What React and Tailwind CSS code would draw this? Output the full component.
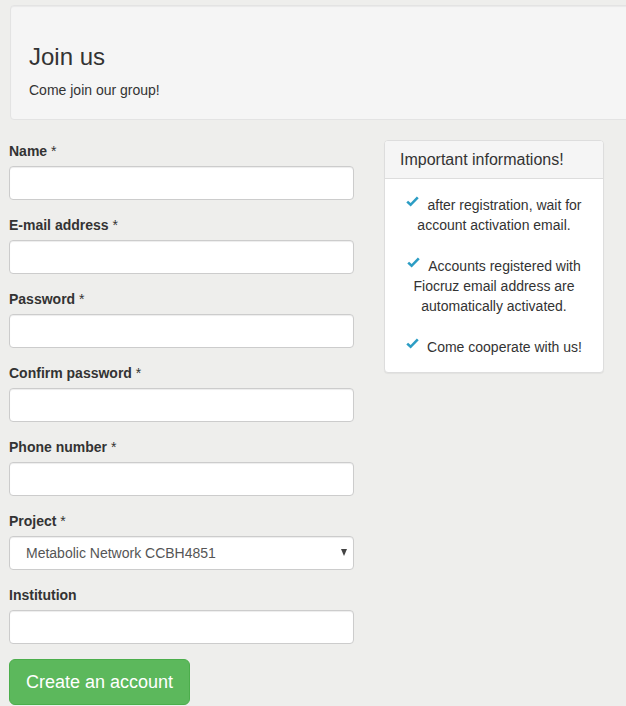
import React from 'react';

const fields = [
  { label: 'Name', required: true },
  { label: 'E-mail address', required: true, type: 'email' },
  { label: 'Password', required: true, type: 'password' },
  { label: 'Confirm password', required: true, type: 'password' },
  { label: 'Phone number', required: true },
];

const notes = [
  'after registration, wait for account activation email.',
  'Accounts registered with Fiocruz email address are automatically activated.',
  'Come cooperate with us!',
];

const Check = () => (
  <svg
    width="13"
    height="11"
    viewBox="0 0 13 11"
    className="inline-block align-baseline relative top-[-3px] mr-[8px]"
  >
    <path d="M1.2 5.6 L4.6 8.8 L11.8 1.4" fill="none" stroke="#2c9dc4" strokeWidth="2.6" />
  </svg>
);

const Label = ({ children, required }) => (
  <label className="block mb-[5px] text-[14px] leading-[20px] font-bold text-[#333]">
    {children}
    {required && <span className="font-normal"> *</span>}
  </label>
);

const inputCls =
  'block w-full h-[34px] px-[12px] py-[6px] bg-white border border-[#ccc] rounded-[4px] shadow-[inset_0_1px_1px_rgba(0,0,0,0.075)] text-[14px] text-[#555] outline-none';

const App = () => {
  return (
    <div className="min-h-screen overflow-hidden bg-[#eeeeec] font-['Liberation_Sans',Arial,sans-serif] text-[#333]">
      <div className="pt-[5px] pl-[10px]">
        <div className="w-[700px] bg-[#f5f5f5] border border-[#e3e3e3] rounded-[4px] shadow-[inset_0_1px_1px_rgba(0,0,0,0.05)] pl-[18px] pt-[38px] pb-[19px]">
          <h3 className="text-[24px] leading-[26px] font-normal mb-[10px]">Join us</h3>
          <p className="text-[14px] leading-[20px]">Come join our group!</p>
        </div>
      </div>

      <div className="flex pl-[9px] mt-[20px] gap-[30px]">
        <form className="w-[345px] pt-[1px]" onSubmit={(e) => e.preventDefault()}>
          {fields.map((f) => (
            <div key={f.label} className="mb-[15px]">
              <Label required={f.required}>{f.label}</Label>
              <input type={f.type || 'text'} className={inputCls} />
            </div>
          ))}

          <div className="mb-[15px]">
            <Label required>Project</Label>
            <div className="relative">
              <select className={`${inputCls} appearance-none pl-[16px]`} defaultValue="ccbh">
                <option value="ccbh">Metabolic Network CCBH4851</option>
              </select>
              <span className="absolute right-[7px] top-[13px] w-0 h-0 border-l-[3.5px] border-r-[3.5px] border-t-[7px] border-l-transparent border-r-transparent border-t-[#444]"></span>
            </div>
          </div>

          <div className="mb-[15px]">
            <Label>Institution</Label>
            <input type="text" className={inputCls} />
          </div>

          <button
            type="submit"
            className="h-[46px] px-[16px] bg-[#5cb85c] border border-[#4cae4c] rounded-[6px] text-white text-[18px] leading-[24px]"
          >
            Create an account
          </button>
        </form>

        <aside className="w-[220px] self-start bg-white border border-[#ddd] rounded-[4px] shadow-[0_1px_1px_rgba(0,0,0,0.05)]">
          <div className="bg-[#f5f5f5] border-b border-[#ddd] rounded-t-[3px] px-[15px] py-[10px] text-[16px] leading-[17px] text-[#333]">
            Important informations!
          </div>
          <div className="px-[15px] pt-[16px] pb-[15px] text-center text-[14px] leading-[20px] flex flex-col gap-[21px]">
            {notes.map((n) => (
              <p key={n}>
                <Check />
                {n}
              </p>
            ))}
          </div>
        </aside>
      </div>
    </div>
  );
};

export default App;
